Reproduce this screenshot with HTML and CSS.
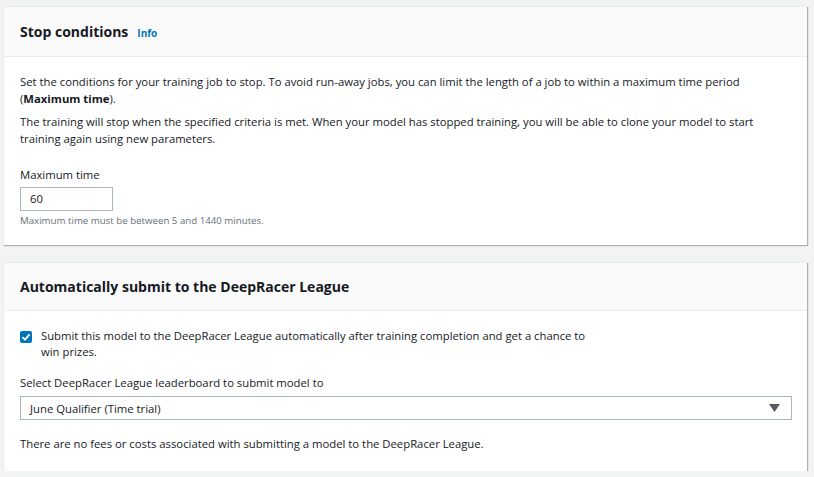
FILE: index.html
```html
<!DOCTYPE html>
<html>
<head>
<meta charset="utf-8">
<link rel="stylesheet" href="styles.css">
</head>
<body>
<div class="page">
  <section class="card">
    <header class="card-header">
      <h2 class="title">Stop conditions</h2>
      <a class="info">Info</a>
    </header>
    <div class="card-body">
      <p class="para">Set the conditions for your training job to stop. To avoid run-away jobs, you can limit the length of a job to within a maximum time period <span class="nowrap">(<b>Maximum time</b>).</span></p>
      <p class="para">The training will stop when the specified criteria is met. When your model has stopped training, you will be able to clone your model to start training again using new parameters.</p>
      <div class="field">
        <div class="label">Maximum time</div>
        <div class="input">60</div>
        <div class="hint">Maximum time must be between 5 and 1440 minutes.</div>
      </div>
    </div>
  </section>
  <section class="card">
    <header class="card-header header2">
      <h2 class="title">Automatically submit to the DeepRacer League</h2>
    </header>
    <div class="card-body body2">
      <div class="check-row">
        <span class="checkbox"><svg width="12" height="12" viewBox="0 0 12 12"><path d="M2.5 6.2 L5 8.6 L9.6 3.4" fill="none" stroke="#fff" stroke-width="1.8"/></svg></span>
        <span class="check-text">Submit this model to the DeepRacer League automatically after training completion and get a chance to win prizes.</span>
      </div>
      <div class="label label2">Select DeepRacer League leaderboard to submit model to</div>
      <div class="select">
        <span>June Qualifier (Time trial)</span>
        <svg width="11" height="8" viewBox="0 0 11 8"><path d="M0 0 H11 L5.5 8 Z" fill="#545b64"/></svg>
      </div>
      <p class="para note">There are no fees or costs associated with submitting a model to the DeepRacer League.</p>
    </div>
  </section>
</div>
</body>
</html>
```
FILE: styles.css
```css
html, body {
  margin: 0;
  padding: 0;
  background: #f2f3f3;
}
body {
  font-family: "Open Sans", "Liberation Sans", sans-serif;
  font-size: 11.3px;
  color: #16191f;
}
.page {
  padding: 6px 7px 0 3px;
  display: flex;
  flex-direction: column;
  gap: 17px;
}
.card {
  background: #fff;
  border-left: 1px solid #eaeded;
  border-top: 1px solid #eaeded;
  box-shadow: 1px 1px 1px 0 rgba(0,28,36,0.3);
}
.card-header {
  background: #fafafa;
  border-bottom: 1px solid #eaeded;
  height: 50px;
  display: flex;
  align-items: center;
  padding: 0 16px;
  box-sizing: border-box;
}
.header2 {
  height: 48px;
}
.title {
  margin: 0;
  font-size: 14px;
  font-weight: 700;
  line-height: 20px;
}
.info {
  color: #0073bb;
  font-size: 10px;
  font-weight: 700;
  margin-left: 9px;
  margin-top: 2px;
}
.card-body {
  padding: 16px 16px 17px 16px;
}
.nowrap {
  white-space: nowrap;
}
.para {
  margin: 0 0 6px 0;
  line-height: 17px;
}
.field {
  margin-top: 19px;
}
.label {
  line-height: 17px;
  margin-bottom: 4px;
}
.input {
  width: 93px;
  height: 24px;
  box-sizing: border-box;
  border: 1px solid #aab7b8;
  padding: 0 9px;
  line-height: 22px;
}
.hint {
  font-size: 9.7px;
  color: #687078;
  line-height: 14px;
  margin-top: 3px;
}
.body2 {
  padding-top: 17px;
  padding-bottom: 19px;
}
.check-row {
  display: flex;
  gap: 9px;
  align-items: flex-start;
}
.checkbox {
  flex: none;
  width: 12px;
  height: 12px;
  border-radius: 2px;
  background: #0073bb;
  margin-top: 3px;
  display: flex;
}
.check-text {
  max-width: 550px;
  line-height: 16px;
}
.label2 {
  margin-top: 14px;
  margin-bottom: 5px;
}
.select {
  width: 772px;
  height: 24px;
  box-sizing: border-box;
  border: 1px solid #aab7b8;
  padding: 0 11px 0 9px;
  display: flex;
  align-items: center;
  justify-content: space-between;
}
.note {
  margin-top: 15px;
  margin-bottom: 0;
}
```
